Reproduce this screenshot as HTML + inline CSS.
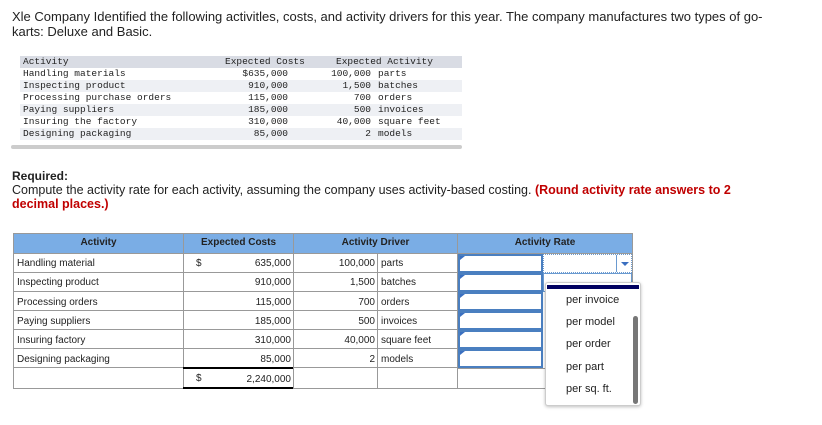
<!DOCTYPE html>
<html><head><style>
*{margin:0;padding:0;box-sizing:border-box}
body{width:822px;height:425px;background:#fff;font-family:"Liberation Sans",sans-serif;position:relative;overflow:hidden;color:#222}
.a{position:absolute;white-space:nowrap}
.m{font-family:"Liberation Mono",monospace;font-size:9.5px;color:#222}
.t{font-size:10px}
.bg{position:absolute;left:20px;width:442px;height:12px}
.h{position:absolute;background:#7aade5;border:1px solid #999;font-size:10px;font-weight:bold;text-align:center;line-height:18px;color:#222}
.inp{position:absolute;border:2px solid #4a7fc0;background:#fff}
.inp:before{content:"";position:absolute;left:0;top:0;border-left:5px solid #3a6fc0;border-bottom:4px solid transparent}
.dd{font-size:11px;color:#222;position:absolute;left:20px}
</style></head><body>
<div class="a" style="left:12px;top:9px;font-size:13px;line-height:15px">Xle Company Identified the following activitles, costs, and activity drivers for this year. The company manufactures two types of go-<br>karts: Deluxe and Basic.</div>

<div class="bg" style="top:56px;background:#d9dce4"></div>
<div class="bg" style="top:80px;background:#eef0f4"></div>
<div class="bg" style="top:104px;background:#eef0f4"></div>
<div class="bg" style="top:128px;background:#eef0f4"></div>
<div class="a" style="left:11px;top:145px;width:451px;height:4px;background:#ccc;border-radius:2px"></div>
<div class="a m" style="left:23px;top:56px;line-height:12px">Activity<br>Handling materials<br>Inspecting product<br>Processing purchase orders<br>Paying suppliers<br>Insuring the factory<br>Designing packaging</div>
<div class="a m" style="left:225px;top:56px;line-height:12px">Expected Costs</div>
<div class="a m" style="left:226px;top:68px;width:62px;text-align:right;line-height:12px">$635,000<br>910,000<br>115,000<br>185,000<br>310,000<br>85,000</div>
<div class="a m" style="left:336px;top:56px;line-height:12px">Expected Activity</div>
<div class="a m" style="left:320px;top:68px;width:51px;text-align:right;line-height:12px">100,000<br>1,500<br>700<br>500<br>40,000<br>2</div>
<div class="a m" style="left:378px;top:68px;line-height:12px">parts<br>batches<br>orders<br>invoices<br>square feet<br>models</div>

<div class="a" style="left:12px;top:169px;font-size:12px;font-weight:bold">Required:</div>
<div class="a" style="left:12px;top:183px;font-size:12.5px;line-height:14px">Compute the activity rate for each activity, assuming the company uses activity-based costing. <b style="color:#c00000">(Round activity rate answers to 2</b><br><b style="color:#c00000">decimal places.)</b></div>

<div class="h" style="left:13px;top:233px;width:171px;height:21px">Activity</div>
<div class="h" style="left:183px;top:233px;width:111px;height:21px">Expected Costs</div>
<div class="h" style="left:293px;top:233px;width:165px;height:21px">Activity Driver</div>
<div class="h" style="left:457px;top:233px;width:176px;height:21px">Activity Rate</div>

<div class="a" style="left:13px;top:253px;width:445px;height:136px;border:1px solid #999"></div>
<div class="a t" style="left:17px;top:254px;line-height:19.3px">Handling material<br>Inspecting product<br>Processing orders<br>Paying suppliers<br>Insuring factory<br>Designing packaging</div>
<div class="a" style="left:183px;top:253px;width:1px;height:136px;background:#999"></div>
<div class="a" style="left:293px;top:253px;width:1px;height:136px;background:#999"></div>
<div class="a" style="left:377px;top:253px;width:1px;height:136px;background:#999"></div>
<div class="a" style="left:457px;top:253px;width:1px;height:136px;background:#999"></div>
<div class="a" style="left:13px;top:272px;width:445px;height:1px;background:#999;box-shadow:0 19px 0 #999,0 38px 0 #999,0 57px 0 #999,0 76px 0 #999,0 95px 0 #999"></div>
<div class="a" style="left:183px;top:367px;width:110px;height:2px;background:#000"></div>
<div class="a" style="left:183px;top:387px;width:110px;height:2px;background:#000"></div>
<div class="a t" style="left:196px;top:258px">$</div>
<div class="a t" style="left:196px;top:373px">$</div>
<div class="a t" style="left:220px;top:254px;width:71px;text-align:right;line-height:19.3px">635,000<br>910,000<br>115,000<br>185,000<br>310,000<br>85,000<br>2,240,000</div>
<div class="a t" style="left:300px;top:254px;width:75px;text-align:right;line-height:19.3px">100,000<br>1,500<br>700<br>500<br>40,000<br>2</div>
<div class="a t" style="left:381px;top:254px;line-height:19.3px">parts<br>batches<br>orders<br>invoices<br>square feet<br>models</div>

<div class="a" style="left:457px;top:253px;width:176px;height:136px;border-right:1px solid #999;border-bottom:1px solid #999"></div>
<div class="a" style="left:457px;top:368px;width:176px;height:1px;background:#999"></div>
<div class="inp" style="left:458px;top:254px;width:85px;height:19px"></div>
<div class="inp" style="left:458px;top:273px;width:85px;height:19px"></div>
<div class="inp" style="left:458px;top:292px;width:85px;height:19px"></div>
<div class="inp" style="left:458px;top:311px;width:85px;height:19px"></div>
<div class="inp" style="left:458px;top:330px;width:85px;height:19px"></div>
<div class="inp" style="left:458px;top:349px;width:85px;height:19px"></div>
<div class="a" style="left:543px;top:254px;width:89px;height:19px;border:1px dotted #6a9ad0"></div>
<div class="a" style="left:616px;top:255px;width:1px;height:17px;background:#6a9ad0"></div>
<div class="a" style="left:621px;top:262px;border-left:4px solid transparent;border-right:4px solid transparent;border-top:4px solid #3a6fc0"></div>
<div class="a" style="left:543px;top:273px;width:89px;height:19px;border:1px solid #6a9ad0"></div>

<div class="a" style="left:545px;top:282px;width:96px;height:124px;background:#fff;border:1px solid #ccc;border-radius:3px;box-shadow:0 1px 3px rgba(0,0,0,.25)">
<div class="a" style="left:1px;top:2px;width:92px;height:4px;background:#000060"></div>
<div class="dd" style="top:11px">per invoice</div>
<div class="dd" style="top:33px">per model</div>
<div class="dd" style="top:55px">per order</div>
<div class="dd" style="top:78px">per part</div>
<div class="dd" style="top:100px">per sq. ft.</div>
<div class="a" style="left:87px;top:33px;width:5px;height:88px;background:#777;border-radius:3px"></div>
</div>
</body></html>
